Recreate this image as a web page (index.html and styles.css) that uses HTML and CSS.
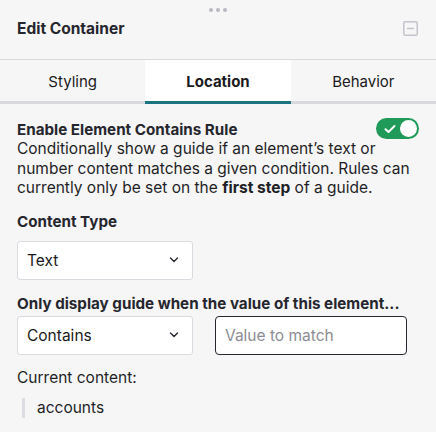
FILE: index.html
```html
<!DOCTYPE html>
<html>
<head>
<meta charset="utf-8">
<link rel="stylesheet" href="styles.css">
</head>
<body>
<div class="panel">
  <div class="grip"><span></span><span></span><span></span></div>
  <div class="header">
    <div class="title">Edit Container</div>
    <svg class="minimize" width="15" height="15" viewBox="0 0 15 15"><rect x="0.75" y="0.75" width="13.5" height="13.5" rx="1.5" fill="none" stroke="#c4c4cc" stroke-width="1.5"/><line x1="4" y1="7.5" x2="11" y2="7.5" stroke="#c4c4cc" stroke-width="1.5"/></svg>
  </div>
  <div class="tabs">
    <div class="tab">Styling</div>
    <div class="tab active">Location</div>
    <div class="tab">Behavior</div>
  </div>
  <div class="content">
    <div class="rule-head">
      <div class="rule-title">Enable Element Contains Rule</div>
      <div class="toggle">
        <svg class="check" width="12" height="10" viewBox="0 0 12 10"><path d="M1.5 5.2 L4.5 8 L10.5 2" fill="none" stroke="#fff" stroke-width="2" stroke-linecap="round" stroke-linejoin="round"/></svg>
        <span class="knob"></span>
      </div>
    </div>
    <p class="desc">Conditionally show a guide if an element’s text or number content matches a given condition. Rules can currently only be set on the <b>first step</b> of a guide.</p>
    <div class="label">Content Type</div>
    <div class="select first">
      <span>Text</span>
      <svg width="10" height="6" viewBox="0 0 10 6"><path d="M1.5 1 L5 4.5 L8.5 1" fill="none" stroke="#26262e" stroke-width="1.4" stroke-linecap="round" stroke-linejoin="round"/></svg>
    </div>
    <div class="label">Only display guide when the value of this element...</div>
    <div class="row">
      <div class="select">
        <span>Contains</span>
        <svg width="10" height="6" viewBox="0 0 10 6"><path d="M1.5 1 L5 4.5 L8.5 1" fill="none" stroke="#26262e" stroke-width="1.4" stroke-linecap="round" stroke-linejoin="round"/></svg>
      </div>
      <div class="input">Value to match</div>
    </div>
    <div class="current">Current content:</div>
    <div class="quote">accounts</div>
  </div>
</div>
</body>
</html>
```
FILE: styles.css
```css
* { box-sizing: border-box; }
html, body { margin: 0; padding: 0; }
body {
  width: 436px;
  height: 432px;
  overflow: hidden;
  background: #f6f6f7;
  font-family: Inter, "Liberation Sans", sans-serif;
  color: #26262e;
}
.panel { display: flex; flex-direction: column; }
.grip {
  display: flex;
  justify-content: center;
  gap: 3px;
  padding-top: 8px;
  height: 14px;
}
.grip span {
  width: 4px; height: 4px; border-radius: 50%;
  background: #b9b9c2;
}
.header {
  height: 46px;
  display: flex;
  align-items: center;
  justify-content: space-between;
  padding: 0 18px 17px 17px;
  border-bottom: 1px solid #d9d9e0;
}
.title { font-size: 15.5px; font-weight: 700; color: #26262e; }
.minimize { display: block; }
.tabs {
  display: grid;
  grid-template-columns: 1fr 1fr 1fr;
  height: 44px;
}
.tab {
  display: flex;
  align-items: center;
  justify-content: center;
  font-size: 15px;
  color: #1a1a20;
  border-bottom: 3px solid #d8d8df;
  padding-top: 1px;
}
.tab.active {
  background: #fff;
  font-weight: 700;
  border-bottom-color: #1b7480;
}
.content { padding: 15px 15px 0 17px; }
.rule-head {
  display: flex;
  justify-content: space-between;
  align-items: center;
  height: 20px;
  margin-right: 2px;
}
.rule-title { font-size: 15.2px; font-weight: 700; }
.toggle {
  width: 43px; height: 21px;
  border-radius: 11px;
  background: #1f9a58;
  display: flex;
  align-items: center;
  justify-content: space-between;
  padding: 0 2px 0 8px;
  margin-top: -1px;
}
.check { display: block; }
.knob {
  width: 17px; height: 17px; border-radius: 50%;
  background: #fff;
}
.desc {
  margin: 0;
  font-size: 15.5px;
  line-height: 19.6px;
  color: #1f1f26;
}
.desc b { font-weight: 700; }
.label {
  font-size: 15.2px;
  font-weight: 700;
  margin-top: 14px;
  height: 20px;
  line-height: 20px;
}
.select {
  width: 176px;
  height: 39px;
  background: #fff;
  border: 1px solid #dadae1;
  border-radius: 3px;
  display: flex;
  align-items: center;
  justify-content: space-between;
  padding: 0 13px 0 9px;
  font-size: 15.5px;
  color: #1a1a20;
}
.select.first { margin-top: 9px; }
.select svg { display: block; }
.row {
  display: flex;
  gap: 22px;
  margin-top: 2px;
}
.input {
  width: 192px;
  height: 39px;
  border: 1px solid #26262e;
  border-radius: 4px;
  background: #fff;
  display: flex;
  align-items: center;
  padding-left: 9px;
  font-size: 15.5px;
  color: #8c8c94;
}
.current {
  margin-top: 13px;
  font-size: 15.5px;
  line-height: 20px;
  color: #1f1f26;
}
.quote {
  margin: 10px 0 0 5px;
  border-left: 3px solid #dcdce2;
  padding-left: 12px;
  font-size: 15.5px;
  line-height: 20px;
  color: #1f1f26;
}
```
